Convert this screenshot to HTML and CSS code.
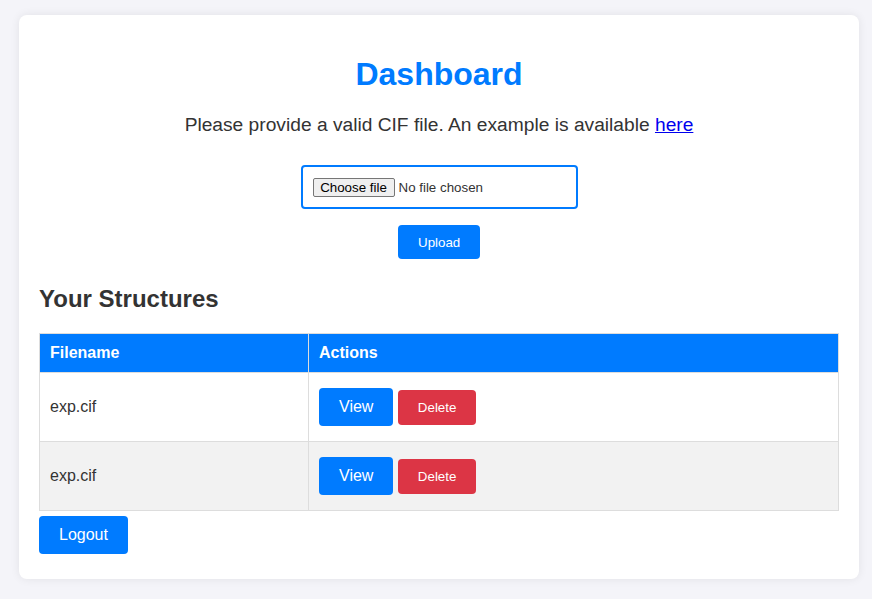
FILE: index.html
```html
<!DOCTYPE html>
<html>
<head>
<meta charset="utf-8">
<link rel="stylesheet" href="styles.css">
</head>
<body>
<div class="card">
  <h1 class="title">Dashboard</h1>
  <p class="intro">Please provide a valid CIF file. An example is available <a href="#">here</a></p>
  <form class="upload">
    <label class="file-box">
      <input type="file" class="file-input">
      <span class="file-btn">Choose file</span>
      <span class="file-status">No file chosen</span>
    </label>
    <button type="button" class="btn btn-small">Upload</button>
  </form>
  <h2 class="section">Your Structures</h2>
  <table class="grid">
    <thead>
      <tr><th class="col-name">Filename</th><th>Actions</th></tr>
    </thead>
    <tbody>
      <tr><td>exp.cif</td><td><button class="btn">View</button> <button class="btn btn-small btn-danger">Delete</button></td></tr>
      <tr><td>exp.cif</td><td><button class="btn">View</button> <button class="btn btn-small btn-danger">Delete</button></td></tr>
    </tbody>
  </table>
  <button class="btn logout">Logout</button>
</div>
</body>
</html>
```
FILE: styles.css
```css
html, body {
  margin: 0;
  padding: 0;
}
body {
  background: #f4f4f9;
  font-family: "Liberation Sans", Arial, sans-serif;
  color: #333;
  padding: 15px 13px 21px 19px;
}
.card {
  width: 800px;
  background: #fff;
  border-radius: 8px;
  box-shadow: 0 0 10px rgba(0, 0, 0, 0.08);
  padding: 20px 20px 25px;
}
.title {
  text-align: center;
  color: #007bff;
  font-size: 32px;
  margin: 21px 0 0;
  line-height: 37px;
}
.intro {
  text-align: center;
  font-size: 19.2px;
  margin: 21px 0 0;
  line-height: 22px;
}
.intro a {
  color: #0000ee;
}
.upload {
  display: flex;
  flex-direction: column;
  align-items: center;
  margin-top: 29px;
}
.file-box {
  box-sizing: border-box;
  width: 277px;
  height: 44px;
  border: 2px solid #007bff;
  border-radius: 4px;
  padding: 0 10px;
  display: flex;
  align-items: center;
  font-size: 13.33px;
  cursor: pointer;
}
.file-input {
  display: none;
}
.file-btn {
  box-sizing: border-box;
  width: 82px;
  height: 19px;
  line-height: 17px;
  text-align: center;
  background: #efefef;
  border: 1px solid #767676;
  border-radius: 2px;
  color: #000;
}
.file-status {
  margin-left: 4px;
  color: #333;
}
.btn {
  background: #007bff;
  color: #fff;
  border: none;
  border-radius: 4px;
  font-family: "Liberation Sans", Arial, sans-serif;
  font-size: 16px;
  padding: 10px 20px;
  line-height: 18px;
  cursor: pointer;
}
.btn-small {
  font-size: 13.33px;
  line-height: 15px;
  padding: 10px 20px;
}
.upload .btn {
  margin-top: 16px;
  width: 82px;
  height: 34px;
}
.btn-danger {
  background: #dc3545;
}
.section {
  font-size: 24px;
  margin: 26px 0 0;
  line-height: 28px;
}
.grid {
  width: 800px;
  border-collapse: collapse;
  margin-top: 20px;
}
.grid th, .grid td {
  border: 1px solid #ddd;
  padding: 10px;
  text-align: left;
  font-size: 16px;
}
.grid th {
  background: #007bff;
  color: #fff;
  height: 17px;
}
.grid td {
  height: 48px;
}
.grid .col-name {
  width: 248px;
}
.grid tbody tr:nth-child(even) {
  background: #f2f2f2;
}
.grid td .btn {
  vertical-align: middle;
}
.logout {
  margin-top: 5px;
}
```
